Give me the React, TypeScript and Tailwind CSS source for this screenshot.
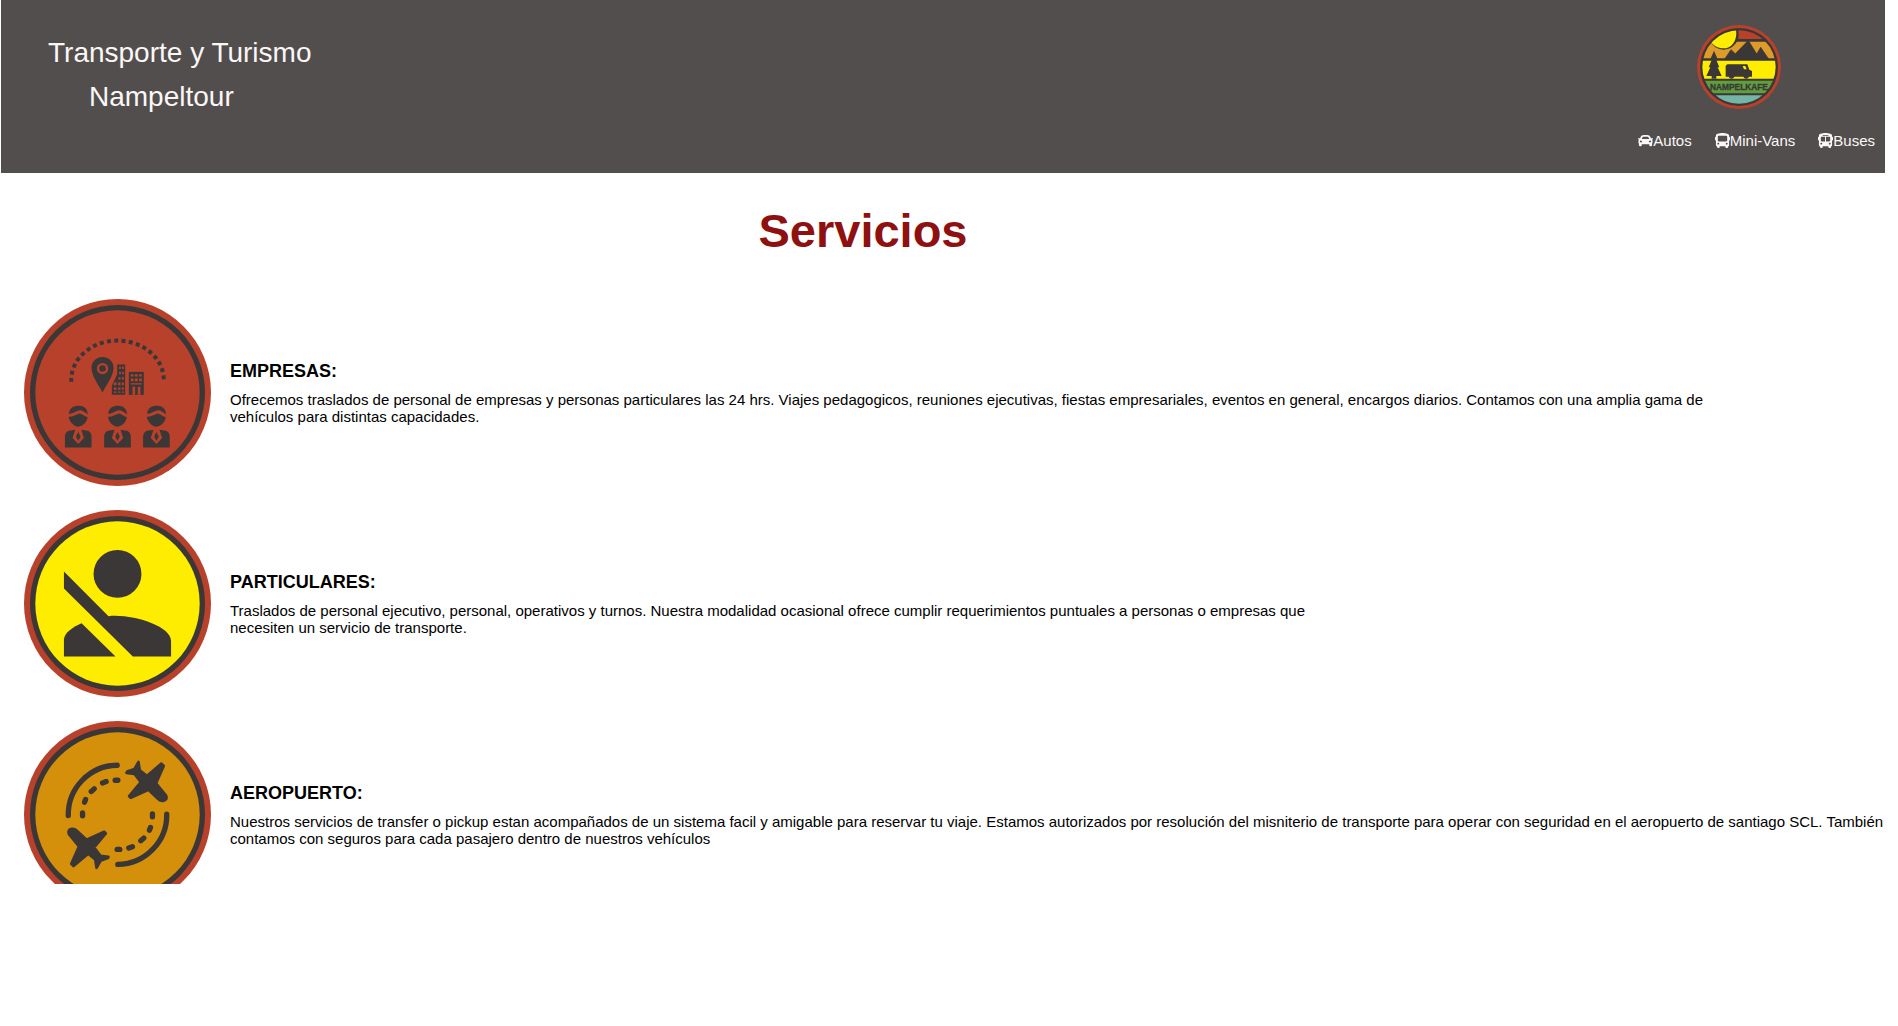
import type { ReactNode } from "react";
import { FaCar, FaBus, FaBusAlt } from "react-icons/fa";

const DARK = "#3b3737";
const RED = "#b8412c";

function Logo() {
  return (
    <svg viewBox="52 28 252 252" className="size-[84px]" role="img" aria-label="Nampelkafe">
      <defs>
        <clipPath id="disc">
          <circle cx="178" cy="154" r="110" />
        </clipPath>
      </defs>
      <circle cx="178" cy="154" r="126" fill={RED} />
      <circle cx="178" cy="154" r="117" fill={DARK} />
      <g clipPath="url(#disc)">
        <path d="M176 40h100v30H176z" fill={RED} />
        <path d="M60 78h236v50H60z" fill="#dd9c2a" />
        <path d="M60 135h236v54H60z" fill="#ffed00" />
        <path d="M60 195h236v38H60z" fill="#5f9f3f" />
        <path d="M60 239h236v44H60z" fill="#74b5a6" />
        <path d="M135 130l19-28 13 12 39-40 25 41 12-20 24 35z" fill={DARK} stroke={DARK} strokeWidth="2" />
        <circle cx="132" cy="58" r="44" fill={DARK} />
        <path d="M88 70L168 38C176 70 158 98 132 98C114 98 100 89 92 76z" fill="#ffed00" />
      </g>
      <path d="M103 105l12 28h-5l9 22h-5l12 26h-16v8H96v-8H80l12-26h-5l9-22h-5z" fill={DARK} />
      <path d="M143 146h60l6 16 8 4v17h-9a9 9 0 0 1-17 0h-27a9 9 0 0 1-17 0h-9v-33z" fill={DARK} />
      <path d="M189 151h8l4 10h-8z" fill="#ffed00" />
      <text
        x="178"
        y="223"
        textAnchor="middle"
        fill={DARK}
        stroke={DARK}
        strokeWidth="1"
        fontFamily="Liberation Sans, sans-serif"
        fontWeight="700"
        fontSize="25"
      >
        NAMPELKAFE
      </text>
    </svg>
  );
}

function Badge({ fill, label, children }: { fill: string; label: string; children: ReactNode }) {
  return (
    <svg viewBox="42 27 562 562" className="size-[187px] shrink-0" role="img" aria-label={label}>
      <circle cx="323" cy="308" r="281" fill={RED} />
      <circle cx="323" cy="308" r="263" fill={DARK} />
      <circle cx="323" cy="308" r="247" fill={fill} />
      {children}
    </svg>
  );
}

function Worker({ x }: { x: number }) {
  return (
    <g transform={`translate(${x} 0)`} fill={DARK}>
      <path d="M-28 372C-27 355-14 348 2 348C18 348 28 358 29 374C20 366 12 361 5 361C-6 362-14 371-28 372z" />
      <path d="M-29 381C-17 382-7 374 4 371C13 373 19 380 28 382C26 398 14 410 0 411C-14 410-26 397-29 381z" />
      <path d="M-40 473V439Q-39 424-24 422L-9 420L-17 445L0 463L17 445L9 420L24 422Q39 424 40 439V473z" />
      <path d="M0 427L7 440L0 454L-7 440z" />
    </g>
  );
}

function CompaniesArt() {
  return (
    <>
      <path d="M184 276V270A139 118 0 0 1 462 270V276" fill="none" stroke={DARK} strokeWidth="12" strokeDasharray="12 10" />
      <path
        fillRule="evenodd"
        fill={DARK}
        d="M278 201a33 33 0 0 1 33 33c0 24-21 50-33 74c-12-24-33-50-33-74a33 33 0 0 1 33-33zM278 219a17 17 0 1 0 0 34a17 17 0 0 0 0-34z"
      />
      <path fill={DARK} d="M322 224h24v91h-40v-27l16-35z" />
      <path fill={DARK} d="M357 246h45v69h-45z" />
      <g fill={RED}>
        <path d="M328 230h5v7h-5zM337 230h5v7h-5zM328 246h5v7h-5zM337 246h5v7h-5zM326 262h6v7h-6zM336 262h6v7h-6zM312 278h8v8h-8zM325 278h7v8h-7zM336 278h6v8h-6zM312 293h8v7h-8zM325 293h7v7h-7zM336 293h6v7h-6zM312 305h8v4h-8zM325 305h7v4h-7zM336 305h6v4h-6z" />
        <path d="M363 253h8v7h-8zM375 253h9v7h-9zM388 253h8v7h-8zM363 266h8v8h-8zM375 266h9v8h-9zM388 266h8v8h-8zM363 280h33v4h-33zM368 291h8v24h-8zM384 291h8v24h-8z" />
      </g>
      <circle cx="278" cy="236" r="10" fill={DARK} />
      <Worker x={205} />
      <Worker x={323} />
      <Worker x={440} />
    </>
  );
}

function PersonArt() {
  return (
    <g fill={DARK}>
      <circle cx="323" cy="219" r="72" />
      <path d="M162 212L296 346C365 338 484 375 484 420V467H369L162 263z" />
      <path d="M215 367L317 467H162V416C163 395 190 378 215 367z" />
    </g>
  );
}

function Plane() {
  return (
    <path
      fill={DARK}
      strokeWidth="8"
      strokeLinejoin="round"
      d="M386 155L390 180L411 197L455 160L462 167L439 219L469 256Q474 270 460 272Q452 273 446 267L416 239L363 263L358 258L393 216L374 191L350 188L352 184L374 176z"
    />
  );
}

function AirportArt() {
  return (
    <g transform="translate(0 -5)" fill="none" stroke={DARK} strokeLinecap="round">
      {[0, 180].map((turn) => (
        <g key={turn} transform={`rotate(${turn} 323 314)`}>
          <path d="M175 316A149 149 0 0 1 322 165" strokeWidth="16" />
          <path d="M218 317V308M224 276L227 268M244 244L253 236M278 218L289 214M316 210H324" strokeWidth="16" />
          <Plane />
        </g>
      ))}
    </g>
  );
}

const services = [
  {
    title: "EMPRESAS:",
    text: "Ofrecemos traslados de personal de empresas y personas particulares las 24 hrs. Viajes pedagogicos, reuniones ejecutivas, fiestas empresariales, eventos en general, encargos diarios. Contamos con una amplia gama de vehículos para distintas capacidades.",
    width: "max-w-[1500px]",
    fill: "#b8412c",
    art: <CompaniesArt />,
  },
  {
    title: "PARTICULARES:",
    text: "Traslados de personal ejecutivo, personal, operativos y turnos. Nuestra modalidad ocasional ofrece cumplir requerimientos puntuales a personas o empresas que necesiten un servicio de transporte.",
    width: "max-w-[1100px]",
    fill: "#ffed00",
    art: <PersonArt />,
  },
  {
    title: "AEROPUERTO:",
    text: "Nuestros servicios de transfer o pickup estan acompañados de un sistema facil y amigable para reservar tu viaje. Estamos autorizados por resolución del misniterio de transporte para operar con seguridad en el aeropuerto de santiago SCL. También contamos con seguros para cada pasajero dentro de nuestros vehículos",
    width: "max-w-[1660px]",
    fill: "#d4900b",
    art: <AirportArt />,
  },
];

const links = [
  { label: "Autos", Icon: FaCar },
  { label: "Mini-Vans", Icon: FaBus },
  { label: "Buses", Icon: FaBusAlt },
];

export default function App() {
  return (
    <div className="min-h-screen bg-white pl-px pr-[13px] font-['Liberation_Sans',Arial,sans-serif] text-black">
      <header className="flex items-start justify-between bg-[#524e4d] pt-[25px] pb-6 text-[#fbf7f6]">
        <div className="pt-[6px] pl-[47px] text-[28px] leading-[44px]">
          <p>Transporte y Turismo</p>
          <p className="pl-[41px]">Nampeltour</p>
        </div>
        <div className="flex flex-col items-end gap-[23px] pr-[10px]">
          <div className="pr-[94px]">
            <Logo />
          </div>
          <nav className="flex gap-[23px] text-[15px] leading-[17px]">
            {links.map(({ label, Icon }) => (
              <a key={label} href="#" className="flex items-center">
                <Icon className="size-[15px]" />
                {label}
              </a>
            ))}
          </nav>
        </div>
      </header>
      <main>
        <h1 className="w-[1724px] max-w-full pt-[30px] text-center text-[47px] leading-[56px] font-bold text-[#8f1010]">Servicios</h1>
        <div className="flex h-[625px] flex-col gap-6 overflow-hidden pt-10 pl-[23px]">
          {services.map((s) => (
            <section key={s.title} className="flex shrink-0 items-center gap-[19px]">
              <Badge fill={s.fill} label={s.title}>
                {s.art}
              </Badge>
              <div className={s.width}>
                <h2 className="mb-[10px] text-lg leading-5 font-bold">{s.title}</h2>
                <p className="text-[15px] leading-[17px]">{s.text}</p>
              </div>
            </section>
          ))}
        </div>
      </main>
    </div>
  );
}
